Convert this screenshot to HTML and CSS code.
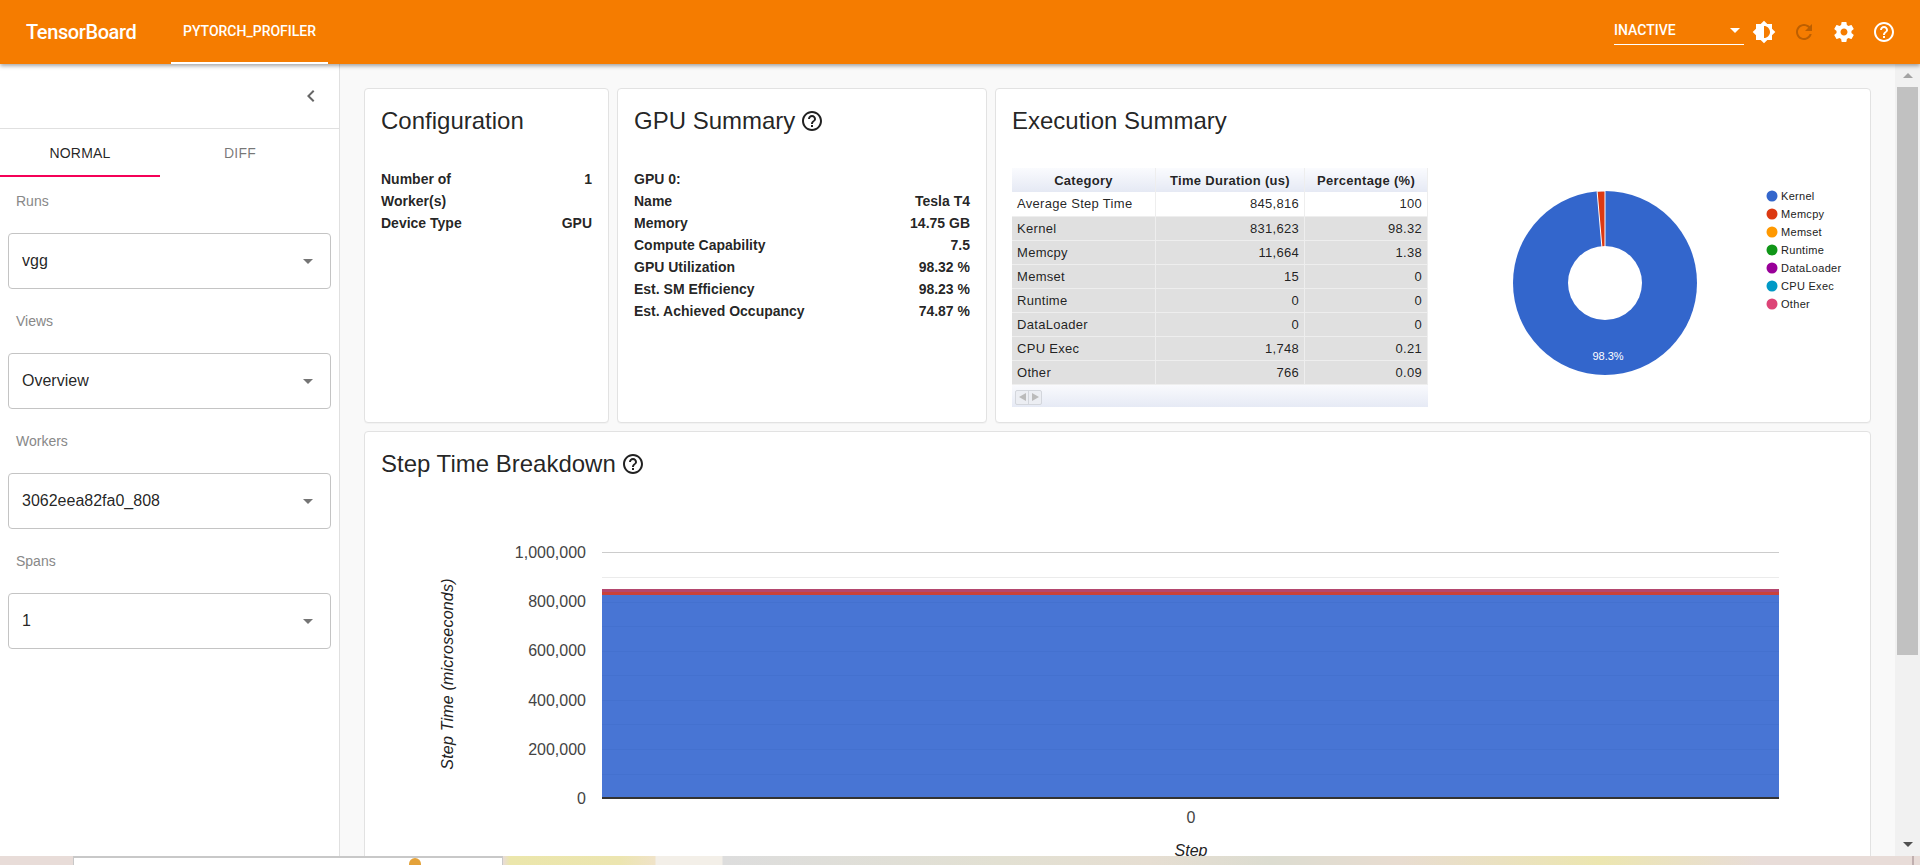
FILE: index.html
```html
<!DOCTYPE html>
<html lang="en">
<head>
    <meta charset="UTF-8">
    <meta name="viewport" content="width=device-width, initial-scale=1.0">
    <title>TensorBoard</title>
    <link rel="stylesheet" href="styles.css">
</head>
<body>

<!-- Top bar -->
<header class="topbar">
    <div class="brand">TensorBoard</div>
    <div class="plugin-tab">PYTORCH_PROFILER</div>
    <div class="topbar-right">
        <div class="status-select">
            <span>INACTIVE</span>
            <span class="status-arrow"></span>
        </div>
        <svg class="top-icon" viewBox="0 0 24 24"><path fill-rule="evenodd" d="M20 15.31L23.31 12 20 8.69V4h-4.69L12 .69 8.69 4H4v4.69L.69 12 4 15.31V20h4.69L12 23.31 15.31 20H20v-4.69zM12 18V6c3.31 0 6 2.69 6 6s-2.69 6-6 6z"/></svg>
        <svg class="top-icon dim" viewBox="0 0 24 24"><path d="M17.65 6.35C16.2 4.9 14.21 4 12 4c-4.42 0-7.99 3.58-7.99 8s3.57 8 7.99 8c3.73 0 6.84-2.55 7.73-6h-2.08c-.82 2.33-3.04 4-5.65 4-3.31 0-6-2.69-6-6s2.69-6 6-6c1.66 0 3.14.69 4.22 1.78L13 11h7V4l-2.35 2.35z"/></svg>
        <svg class="top-icon" viewBox="0 0 24 24"><path d="M19.43 12.98c.04-.32.07-.64.07-.98s-.03-.66-.07-.98l2.11-1.65c.19-.15.24-.42.12-.64l-2-3.46c-.12-.22-.39-.3-.61-.22l-2.49 1c-.52-.4-1.08-.73-1.69-.98l-.38-2.65C14.46 2.18 14.25 2 14 2h-4c-.25 0-.46.18-.49.42l-.38 2.65c-.61.25-1.17.59-1.69.98l-2.49-1c-.23-.09-.49 0-.61.22l-2 3.46c-.13.22-.07.49.12.64l2.11 1.65c-.04.32-.07.65-.07.98s.03.66.07.98l-2.11 1.65c-.19.15-.24.42-.12.64l2 3.46c.12.22.39.3.61.22l2.49-1c.52.4 1.08.73 1.69.98l.38 2.65c.03.24.24.42.49.42h4c.25 0 .46-.18.49-.42l.38-2.65c.61-.25 1.17-.59 1.69-.98l2.49 1c.23.09.49 0 .61-.22l2-3.46c.12-.22.07-.49-.12-.64l-2.11-1.65zM12 15.5c-1.93 0-3.5-1.57-3.5-3.5s1.57-3.5 3.5-3.5 3.5 1.57 3.5 3.5-1.57 3.5-3.5 3.5z"/></svg>
        <svg class="top-icon" viewBox="0 0 24 24"><path d="M11 18h2v-2h-2v2zm1-16C6.48 2 2 6.48 2 12s4.48 10 10 10 10-4.48 10-10S17.52 2 12 2zm0 18c-4.41 0-8-3.59-8-8s3.59-8 8-8 8 3.59 8 8-3.59 8-8 8zm0-14c-2.21 0-4 1.79-4 4h2c0-1.1.9-2 2-2s2 .9 2 2c0 2-3 1.75-3 5h2c0-2.25 3-2.5 3-5 0-2.21-1.79-4-4-4z"/></svg>
    </div>
</header>

<div class="workspace">
    <!-- Left panel -->
    <aside class="sidebar">
        <div class="collapse-row">
            <svg class="chevron" viewBox="0 0 24 24"><path d="M15.41 7.41L14 6l-6 6 6 6 1.41-1.41L10.83 12z"/></svg>
        </div>
        <div class="mode-tabs">
            <div class="mode-tab active">NORMAL</div>
            <div class="mode-tab">DIFF</div>
        </div>
        <div class="fields">
            <div class="field">
                <div class="field-label">Runs</div>
                <div class="select-box"><span>vgg</span><span class="select-arrow"></span></div>
            </div>
            <div class="field">
                <div class="field-label">Views</div>
                <div class="select-box"><span>Overview</span><span class="select-arrow"></span></div>
            </div>
            <div class="field">
                <div class="field-label">Workers</div>
                <div class="select-box"><span>3062eea82fa0_808</span><span class="select-arrow"></span></div>
            </div>
            <div class="field">
                <div class="field-label">Spans</div>
                <div class="select-box"><span>1</span><span class="select-arrow"></span></div>
            </div>
        </div>
    </aside>

    <!-- Overview -->
    <main class="main">
        <div class="summary-row">
            <section class="card">
                <h2 class="card-title">Configuration</h2>
                <table class="kv-table">
                    <tr><td class="kv-name-narrow">Number of Worker(s)</td><td>1</td></tr>
                    <tr><td>Device Type</td><td>GPU</td></tr>
                </table>
            </section>

            <section class="card">
                <h2 class="card-title">GPU Summary
                    <svg class="help-icon" viewBox="0 0 24 24"><path d="M11 18h2v-2h-2v2zm1-16C6.48 2 2 6.48 2 12s4.48 10 10 10 10-4.48 10-10S17.52 2 12 2zm0 18c-4.41 0-8-3.59-8-8s3.59-8 8-8 8 3.59 8 8-3.59 8-8 8zm0-14c-2.21 0-4 1.79-4 4h2c0-1.1.9-2 2-2s2 .9 2 2c0 2-3 1.75-3 5h2c0-2.25 3-2.5 3-5 0-2.21-1.79-4-4-4z"/></svg>
                </h2>
                <table class="kv-table">
                    <tr><td>GPU 0:</td><td></td></tr>
                    <tr><td>Name</td><td>Tesla T4</td></tr>
                    <tr><td>Memory</td><td>14.75 GB</td></tr>
                    <tr><td>Compute Capability</td><td>7.5</td></tr>
                    <tr><td>GPU Utilization</td><td>98.32 %</td></tr>
                    <tr><td>Est. SM Efficiency</td><td>98.23 %</td></tr>
                    <tr><td>Est. Achieved Occupancy</td><td>74.87 %</td></tr>
                </table>
            </section>

            <section class="card">
                <h2 class="card-title">Execution Summary</h2>
                <div class="exec-body">
                    <div class="grid-wrap">
                        <table class="grid-table">
                            <thead>
                                <tr><th class="col-cat">Category</th><th class="col-time">Time Duration (us)</th><th>Percentage (%)</th></tr>
                            </thead>
                            <tbody>
                                <tr class="plain"><td>Average Step Time</td><td>845,816</td><td>100</td></tr>
                                <tr><td>Kernel</td><td>831,623</td><td>98.32</td></tr>
                                <tr><td>Memcpy</td><td>11,664</td><td>1.38</td></tr>
                                <tr><td>Memset</td><td>15</td><td>0</td></tr>
                                <tr><td>Runtime</td><td>0</td><td>0</td></tr>
                                <tr><td>DataLoader</td><td>0</td><td>0</td></tr>
                                <tr><td>CPU Exec</td><td>1,748</td><td>0.21</td></tr>
                                <tr><td>Other</td><td>766</td><td>0.09</td></tr>
                            </tbody>
                        </table>
                        <div class="grid-pager">
                            <div class="pager-btns">
                                <span class="pager-btn"><span class="tri-left"></span></span>
                                <span class="pager-btn"><span class="tri-right"></span></span>
                            </div>
                        </div>
                    </div>
                    <svg class="pie" viewBox="0 0 440 240" width="440" height="240">
                        <!-- centre 177,115 -->
                        <circle cx="177" cy="115" r="92" fill="#3366cc"/>
                        <path d="M177 115 L169.1 23.3 A92 92 0 0 1 177 23 Z" fill="#dc3912" stroke="#fff" stroke-width="1"/>
                        <circle cx="177" cy="115" r="37" fill="#fff"/>
                        <text x="180" y="192" class="pie-pct" text-anchor="middle">98.3%</text>
                        <circle cx="344" cy="28" r="5.5" fill="#3366cc"/>
                        <text x="353" y="32" class="pie-legend">Kernel</text>
                        <circle cx="344" cy="46" r="5.5" fill="#dc3912"/>
                        <text x="353" y="50" class="pie-legend">Memcpy</text>
                        <circle cx="344" cy="64" r="5.5" fill="#ff9900"/>
                        <text x="353" y="68" class="pie-legend">Memset</text>
                        <circle cx="344" cy="82" r="5.5" fill="#109618"/>
                        <text x="353" y="86" class="pie-legend">Runtime</text>
                        <circle cx="344" cy="100" r="5.5" fill="#990099"/>
                        <text x="353" y="104" class="pie-legend">DataLoader</text>
                        <circle cx="344" cy="118" r="5.5" fill="#0099c6"/>
                        <text x="353" y="122" class="pie-legend">CPU Exec</text>
                        <circle cx="344" cy="136" r="5.5" fill="#dd4477"/>
                        <text x="353" y="140" class="pie-legend">Other</text>
                    </svg>
                </div>
            </section>
        </div>

        <section class="card step-card">
            <h2 class="card-title">Step Time Breakdown
                <svg class="help-icon" viewBox="0 0 24 24"><path d="M11 18h2v-2h-2v2zm1-16C6.48 2 2 6.48 2 12s4.48 10 10 10 10-4.48 10-10S17.52 2 12 2zm0 18c-4.41 0-8-3.59-8-8s3.59-8 8-8 8 3.59 8 8-3.59 8-8 8zm0-14c-2.21 0-4 1.79-4 4h2c0-1.1.9-2 2-2s2 .9 2 2c0 2-3 1.75-3 5h2c0-2.25 3-2.5 3-5 0-2.21-1.79-4-4-4z"/></svg>
            </h2>
            <!-- chart origin is at page x=366, y=481 -->
            <svg class="step-chart" viewBox="0 0 1504 400" width="1504" height="400">
                <line x1="236" x2="1413" y1="72.5" y2="72.5" stroke="#ccc"/>
                <line x1="236" x2="1413" y1="97.5" y2="97.5" stroke="#ebebeb"/>
                <rect x="236" y="109" width="1177" height="3" fill="#b4476e"/>
                <rect x="236" y="112" width="1177" height="3" fill="#c9423a"/>
                <rect x="236" y="115" width="1177" height="203" fill="#4875d4"/>
                <g stroke="#4471cf">
                    <line x1="236" x2="1413" y1="122.5" y2="122.5"/>
                    <line x1="236" x2="1413" y1="146.5" y2="146.5"/>
                    <line x1="236" x2="1413" y1="171.5" y2="171.5"/>
                    <line x1="236" x2="1413" y1="195.5" y2="195.5"/>
                    <line x1="236" x2="1413" y1="220.5" y2="220.5"/>
                    <line x1="236" x2="1413" y1="244.5" y2="244.5"/>
                    <line x1="236" x2="1413" y1="269.5" y2="269.5"/>
                    <line x1="236" x2="1413" y1="294.5" y2="294.5"/>
                </g>
                <rect x="236" y="317" width="1177" height="2" fill="#333"/>
                <g class="axis-label" text-anchor="end">
                    <text x="220" y="78">1,000,000</text>
                    <text x="220" y="127">800,000</text>
                    <text x="220" y="176">600,000</text>
                    <text x="220" y="226">400,000</text>
                    <text x="220" y="275">200,000</text>
                    <text x="220" y="324">0</text>
                </g>
                <text class="axis-label" x="825" y="343" text-anchor="middle">0</text>
                <text class="axis-title" x="825" y="376" text-anchor="middle">Step</text>
                <text class="axis-title y-title" transform="translate(87 194) rotate(-90)" text-anchor="middle">Step Time (microseconds)</text>
            </svg>
        </section>
    </main>

    <!-- Page scrollbar -->
    <div class="scrollbar">
        <span class="scroll-up"></span>
        <div class="scroll-track"><div class="scroll-thumb"></div></div>
        <span class="scroll-down"></span>
    </div>
</div>

<!-- Next window peeking in below the browser -->
<div class="desktop-strip">
    <div class="peek-window">
        <span class="peek-mark"></span>
    </div>
    <div class="strip-divider"></div>
</div>

</body>
</html>
```

FILE: styles.css
```css
* {
    box-sizing: border-box;
}
body {
    margin: 0;
    height: 865px;
    overflow: hidden;
    display: flex;
    flex-direction: column;
    font-family: "Liberation Sans", Arial, sans-serif;
    color: rgba(0, 0, 0, 0.87);
    background-color: #f9f9f9;
}

/* top bar */
.topbar {
    position: relative;
    z-index: 2;
    flex: none;
    height: 64px;
    display: flex;
    align-items: stretch;
    padding-left: 26px;
    font-family: Roboto, Arial, sans-serif;
    background-color: #f57c00;
    color: #fff;
    box-shadow: 0 2px 4px rgba(0, 0, 0, 0.35);
}
.brand {
    width: 145px;
    line-height: 64px;
    font-size: 20px;
    font-weight: 500;
    letter-spacing: -0.4px;
}
.plugin-tab {
    width: 157px;
    line-height: 62px;
    text-align: center;
    font-size: 14px;
    font-weight: 500;
    border-bottom: 2px solid #fff;
}
.topbar-right {
    margin-left: auto;
    display: flex;
    align-items: center;
    gap: 16px;
    padding-right: 24px;
}
.status-select {
    width: 130px;
    height: 24px;
    margin: 0 -8px -1px 0;
    display: flex;
    align-items: center;
    justify-content: space-between;
    padding: 0 4px 4px 0;
    font-size: 14px;
    font-weight: 500;
    border-bottom: 1px solid #fff;
}
.status-arrow {
    width: 0;
    height: 0;
    border-left: 5px solid transparent;
    border-right: 5px solid transparent;
    border-top: 5px solid #fff;
}
.top-icon {
    width: 24px;
    height: 24px;
    fill: #fff;
}
.top-icon.dim {
    fill: #bd5f00;
}

/* main area */
.workspace {
    flex: 1;
    min-height: 0;
    display: flex;
}
.sidebar {
    flex: none;
    width: 340px;
    background-color: #fff;
    border-right: 1px solid #e0e0e0;
}
.collapse-row {
    height: 65px;
    display: flex;
    align-items: center;
    justify-content: flex-end;
    padding-right: 16px;
    border-bottom: 1px solid #e0e0e0;
}
.chevron {
    width: 24px;
    height: 24px;
    fill: #666;
}
.mode-tabs {
    display: flex;
}
.mode-tab {
    width: 160px;
    height: 48px;
    line-height: 48px;
    text-align: center;
    font-size: 14px;
    letter-spacing: 0.2px;
    color: rgba(0, 0, 0, 0.54);
}
.mode-tab.active {
    color: rgba(0, 0, 0, 0.87);
    border-bottom: 2px solid #f50057;
}
.fields {
    padding: 14px 8px 0;
}
.field + .field {
    margin-top: 22px;
}
.field-label {
    height: 20px;
    line-height: 20px;
    margin: 0 0 22px 8px;
    font-size: 14px;
    color: #888;
}
.select-box {
    width: 323px;
    height: 56px;
    display: flex;
    align-items: center;
    justify-content: space-between;
    padding: 0 17px 0 13px;
    font-size: 16px;
    border: 1px solid #c4c4c4;
    border-radius: 4px;
}
.select-arrow {
    width: 0;
    height: 0;
    border-left: 5px solid transparent;
    border-right: 5px solid transparent;
    border-top: 5px solid #757575;
}
.main {
    flex: 1;
    min-width: 0;
    padding: 24px 0 0 24px;
    overflow: hidden;
}
.summary-row {
    display: grid;
    grid-template-columns: 245px 370px 876px;
    gap: 8px;
    height: 335px;
}
.card {
    background-color: #fff;
    border: 1px solid #e2e2e2;
    border-radius: 4px;
    box-shadow: 0 1px 1px rgba(0, 0, 0, 0.03);
}
.card-title {
    display: flex;
    align-items: center;
    gap: 5px;
    height: 32px;
    margin: 16px 0 31px 16px;
    font-size: 24px;
    font-weight: 400;
}
.help-icon {
    width: 24px;
    height: 24px;
    fill: #212121;
}
.kv-table {
    width: calc(100% - 32px);
    margin: 0 16px;
    border-collapse: collapse;
    font-size: 14px;
    font-weight: 700;
    line-height: 22px;
}
.kv-table td {
    padding: 0;
    vertical-align: top;
}
.kv-table td:last-child {
    text-align: right;
}
.kv-name-narrow {
    width: 90px;
}

/* execution summary */
.exec-body {
    display: flex;
    padding-left: 16px;
    margin-top: 1px;
}
.grid-wrap {
    width: 416px;
    flex: none;
}
.grid-table {
    width: 100%;
    table-layout: fixed;
    border-collapse: collapse;
    font-size: 13px;
    letter-spacing: 0.3px;
}
.grid-table th {
    height: 24px;
    padding: 0;
    font-weight: 700;
    text-align: center;
    background: linear-gradient(#fafbfe, #e5e9f4);
    border-right: 1px solid #eee;
}
.grid-table .col-cat {
    width: 143.5px;
}
.grid-table .col-time {
    width: 149px;
}
.grid-table td {
    height: 24px;
    padding: 0 5px;
    text-align: right;
    background-color: #e0e0e0;
    border-right: 1px solid #eee;
    border-bottom: 1px solid #eee;
}
.grid-table td:first-child {
    text-align: left;
}
.grid-table .plain td {
    background-color: #fff;
}
.grid-pager {
    height: 22px;
    padding-top: 5px;
    padding-left: 3px;
    background: linear-gradient(#f9fafd, #e6eaf5);
}
.pager-btns {
    width: 27px;
    height: 15px;
    display: flex;
    border: 1px solid #d3d6dc;
    border-radius: 2px;
    background-color: #eceef3;
}
.pager-btn {
    flex: 1;
    display: flex;
    align-items: center;
    justify-content: center;
}
.pager-btn + .pager-btn {
    border-left: 1px solid #d3d6dc;
}
.tri-left {
    border-top: 4px solid transparent;
    border-bottom: 4px solid transparent;
    border-right: 7px solid #bbb;
}
.tri-right {
    border-top: 4px solid transparent;
    border-bottom: 4px solid transparent;
    border-left: 7px solid #bbb;
}
.pie {
    flex: none;
}
.pie-pct {
    font-size: 11px;
    fill: #fff;
}
.pie-legend {
    font-size: 11px;
    letter-spacing: 0.3px;
    fill: #222;
}

/* step time chart */
.step-card {
    width: 1507px;
    height: 500px;
    margin-top: 8px;
}
.step-card .card-title {
    margin-bottom: 0;
}
.step-chart {
    display: block;
    margin-left: 1px;
}
.axis-label {
    font-size: 16px;
    fill: #444;
}
.axis-title {
    font-size: 16px;
    font-style: italic;
    fill: #222;
}
.y-title {
    letter-spacing: 0.2px;
}

/* scrollbar */
.scrollbar {
    flex: none;
    width: 25px;
    display: flex;
    flex-direction: column;
    align-items: center;
    background-color: #f1f1f1;
}
.scroll-up {
    margin-top: 9px;
    border-left: 5px solid transparent;
    border-right: 5px solid transparent;
    border-bottom: 5px solid #a3a3a3;
}
.scroll-track {
    flex: 1;
    width: 100%;
    padding: 9px 2px 0 2px;
}
.scroll-thumb {
    height: 568px;
    background-color: #c1c1c1;
}
.scroll-down {
    margin-bottom: 9px;
    border-left: 5px solid transparent;
    border-right: 5px solid transparent;
    border-top: 5px solid #505050;
}

/* desktop behind the browser */
.desktop-strip {
    flex: none;
    height: 9px;
    display: flex;
    background: linear-gradient(90deg, #e8dcd8 0, #e8dcd8 503px, #ebe6ab 510px, #ece5b0 620px, #f0e3c8 655px, #f3efe8 656px, #f3efe8 722px, #ddd 723px, #e2e0d2 1000px, #e6ded2 1150px, #dcdcd0 1270px, #e8dcd0 1400px, #ece6b0 1600px, #e8dcd8 1760px, #e8dcd8 100%);
}
.peek-window {
    width: 430px;
    margin-left: 73px;
    position: relative;
    background-color: #fff;
    border-top: 2px solid #c8c8c8;
    border-left: 1px solid #c8c8c8;
    border-right: 1px solid #c8c8c8;
}
.peek-mark {
    position: absolute;
    top: 0;
    left: 335px;
    width: 12px;
    height: 8px;
    border-radius: 6px 6px 0 0;
    background-color: #e4a23a;
}
.strip-divider {
    width: 2px;
    height: 9px;
    margin-left: 1409px;
    background-color: #c0afaf;
}
```
